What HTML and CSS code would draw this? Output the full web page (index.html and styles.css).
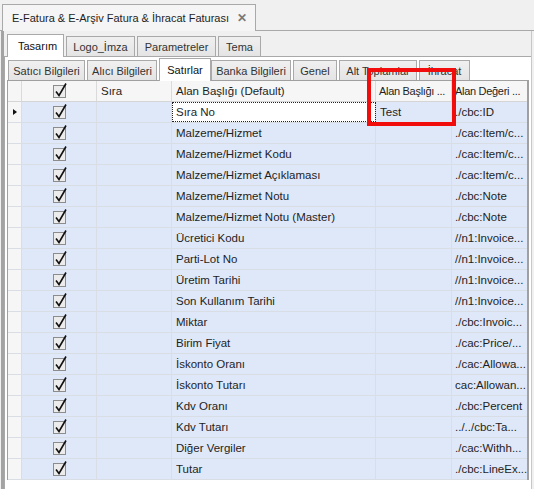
FILE: index.html
```html
<!DOCTYPE html>
<html lang="tr">
<head>
    <meta charset="UTF-8">
    <title>E-Fatura Tasarım</title>
    <link rel="stylesheet" href="styles.css">
</head>
<body>
    <div class="doc-strip">
        <div class="doc-tab">
            <span>E-Fatura &amp; E-Arşiv Fatura &amp; İhracat Faturası</span>
            <span class="close">✕</span>
        </div>
    </div>

    <div class="frame">
        <div class="tabs tabs-main">
            <div class="tab active">Tasarım</div>
            <div class="tab">Logo_İmza</div>
            <div class="tab">Parametreler</div>
            <div class="tab">Tema</div>
        </div>

        <div class="panel">
            <div class="tabs tabs-sub">
                <div class="tab">Satıcı Bilgileri</div>
                <div class="tab">Alıcı Bilgileri</div>
                <div class="tab active">Satırlar</div>
                <div class="tab">Banka Bilgileri</div>
                <div class="tab">Genel</div>
                <div class="tab">Alt Toplamlar</div>
                <div class="tab">İhracat</div>
            </div>

            <div class="grid" id="grid">
                <div class="row head">
                    <div class="cell c-ind"></div>
                    <div class="cell c-chk"></div>
                    <div class="cell c-sira">Sıra</div>
                    <div class="cell c-def">Alan Başlığı (Default)</div>
                    <div class="cell c-title">Alan Başlığı ...</div>
                    <div class="cell c-val">Alan Değeri ...</div>
                </div>
            </div>
        </div>
    </div>

    <div class="highlight"></div>

    <script>
        const rows = [
            ['Sıra No', 'Test', './cbc:ID'],
            ['Malzeme/Hizmet', '', './cac:Item/c...'],
            ['Malzeme/Hizmet Kodu', '', './cac:Item/c...'],
            ['Malzeme/Hizmet Açıklaması', '', './cac:Item/c...'],
            ['Malzeme/Hizmet Notu', '', './cbc:Note'],
            ['Malzeme/Hizmet Notu (Master)', '', './cbc:Note'],
            ['Ücretici Kodu', '', '//n1:Invoice...'],
            ['Parti-Lot No', '', '//n1:Invoice...'],
            ['Üretim Tarihi', '', '//n1:Invoice...'],
            ['Son Kullanım Tarihi', '', '//n1:Invoice...'],
            ['Miktar', '', './cbc:Invoic...'],
            ['Birim Fiyat', '', './cac:Price/...'],
            ['İskonto Oranı', '', './cac:Allowa...'],
            ['İskonto Tutarı', '', 'cac:Allowan...'],
            ['Kdv Oranı', '', './cbc:Percent'],
            ['Kdv Tutarı', '', '../../cbc:Ta...'],
            ['Diğer Vergiler', '', './cac:Withh...'],
            ['Tutar', '', './cbc:LineEx...']
        ];

        const grid = document.getElementById('grid');
        const checkSvg = '<svg class="chk" width="16" height="16" viewBox="0 0 16 16">' +
            '<rect x="1.5" y="3.5" width="12" height="12" fill="#ececec" stroke="#8c8c8c"/>' +
            '<path d="M4 9.5 L7 13.5 L14 1.5" fill="none" stroke="#111" stroke-width="1.6"/></svg>';

        rows.forEach((r, i) => {
            const row = document.createElement('div');
            row.className = 'row';
            row.innerHTML =
                `<div class="cell c-ind">${i === 0 ? '<span class="arrow"></span>' : ''}</div>` +
                `<div class="cell c-chk">${checkSvg}</div>` +
                `<div class="cell c-sira"></div>` +
                `<div class="cell c-def${i === 0 ? ' focus' : ''}">${r[0]}</div>` +
                `<div class="cell c-title">${r[1]}</div>` +
                `<div class="cell c-val">${r[2]}</div>`;
            grid.appendChild(row);
        });

        document.querySelector('.head .c-chk').innerHTML = checkSvg;
    </script>
</body>
</html>
```

FILE: styles.css
```css
* {
    margin: 0;
    padding: 0;
    box-sizing: border-box;
}

body {
    width: 534px;
    height: 489px;
    overflow: hidden;
    position: relative;
    background: #f0f0f0;
    font-family: 'Liberation Sans', Arial, sans-serif;
    font-size: 11.5px;
    color: #1e1e1e;
}

/* document tab */
.doc-strip {
    height: 31px;
    padding: 4px 0 0 2px;
    border-bottom: 1px solid #a9a9a9;
}

.doc-tab {
    width: 254px;
    height: 27px;
    display: flex;
    align-items: center;
    justify-content: space-between;
    padding: 0 8px 0 9px;
    border: 1px solid #a9a9a9;
    border-bottom: none;
    background: #f5f5f5;
    font-size: 11px;
    white-space: nowrap;
}

.close {
    color: #7a7a7a;
    font-weight: bold;
    font-size: 12px;
}

/* outer frame */
.frame {
    height: 458px;
    margin: 0 2px 0 1px;
    border-left: 3px solid #a3a3a3;
    border-right: 1px solid #c8c8c8;
}

.tabs {
    display: flex;
    align-items: flex-end;
}

.tab {
    height: 20px;
    padding: 0 9px;
    margin-right: 2px;
    display: flex;
    align-items: center;
    border: 1px solid #a9a9a9;
    border-bottom: none;
    background: linear-gradient(#f0f0f0, #e4e4e4);
    color: #333;
    white-space: nowrap;
    font-size: 11px;
}

.tab.active {
    height: 23px;
    background: #fff;
    color: #111;
    margin-bottom: -1px;
    position: relative;
}

.tabs-main {
    height: 25px;
    padding-left: 3px;
}

.tabs-main .tab:nth-child(1) { width: 57px; padding-left: 10px; }
.tabs-main .tab:nth-child(2) { width: 69px; justify-content: center; }
.tabs-main .tab:nth-child(3) { width: 79px; justify-content: center; }
.tabs-main .tab:nth-child(4) { width: 43px; justify-content: center; }

.panel {
    height: 433px;
    background: #fff;
    border-top: 1px solid #a9a9a9;
    border-left: 1px solid #a9a9a9;
    padding-left: 2px;
}

.tabs-sub {
    height: 23px;
    padding-left: 1px;
}

.tabs-sub .tab {
    justify-content: center;
    padding: 0;
}

.tabs-sub .tab:nth-child(1) { width: 77px; }
.tabs-sub .tab:nth-child(2) { width: 70px; }
.tabs-sub .tab:nth-child(3) { width: 52px; margin-right: 0; }
.tabs-sub .tab:nth-child(4) { width: 80px; }
.tabs-sub .tab:nth-child(5) { width: 44px; }
.tabs-sub .tab:nth-child(6) { width: 78px; }
.tabs-sub .tab:nth-child(7) { width: 51px; }

/* data grid */
.grid {
    width: 522px;
    border: 1px solid #a0a0a0;
    border-right: 2px solid #a0a0a0;
    border-bottom: none;
    background: #fff;
}

.row {
    display: flex;
    height: 21px;
    border-bottom: 1px solid #d9dde4;
    background: #dfe8f8;
}

.row.head {
    background: #f6f6f6;
    border-bottom-color: #d5d5d5;
}

.cell {
    height: 20px;
    display: flex;
    align-items: center;
    padding-left: 4px;
    border-right: 1px solid #d9dde4;
    white-space: nowrap;
    overflow: hidden;
}

.head .cell {
    border-right-color: #dadada;
}

.head .c-title,
.head .c-val {
    font-size: 11px;
    letter-spacing: -0.3px;
    padding-left: 3px;
}

.c-ind { width: 14px; background: #f6f6f6; position: relative; }
.c-chk { width: 75px; justify-content: center; padding-left: 0; }
.c-sira { width: 75px; }
.c-def { width: 204px; }
.c-title { width: 76px; }
.c-val { width: 75px; border-right: none; padding-left: 3px; }

.chk {
    display: block;
    margin-top: -3px;
    margin-left: 1px;
}

.focus {
    background: #fff;
    outline: 1px dotted #222;
    outline-offset: -1px;
}

.arrow {
    position: absolute;
    left: 5px;
    top: 7px;
    border-left: 4px solid #111;
    border-top: 3.5px solid transparent;
    border-bottom: 3.5px solid transparent;
}

/* red annotation box */
.highlight {
    position: absolute;
    left: 367px;
    top: 68px;
    width: 89px;
    height: 58px;
    border: 4px solid #f20d0d;
}
```
